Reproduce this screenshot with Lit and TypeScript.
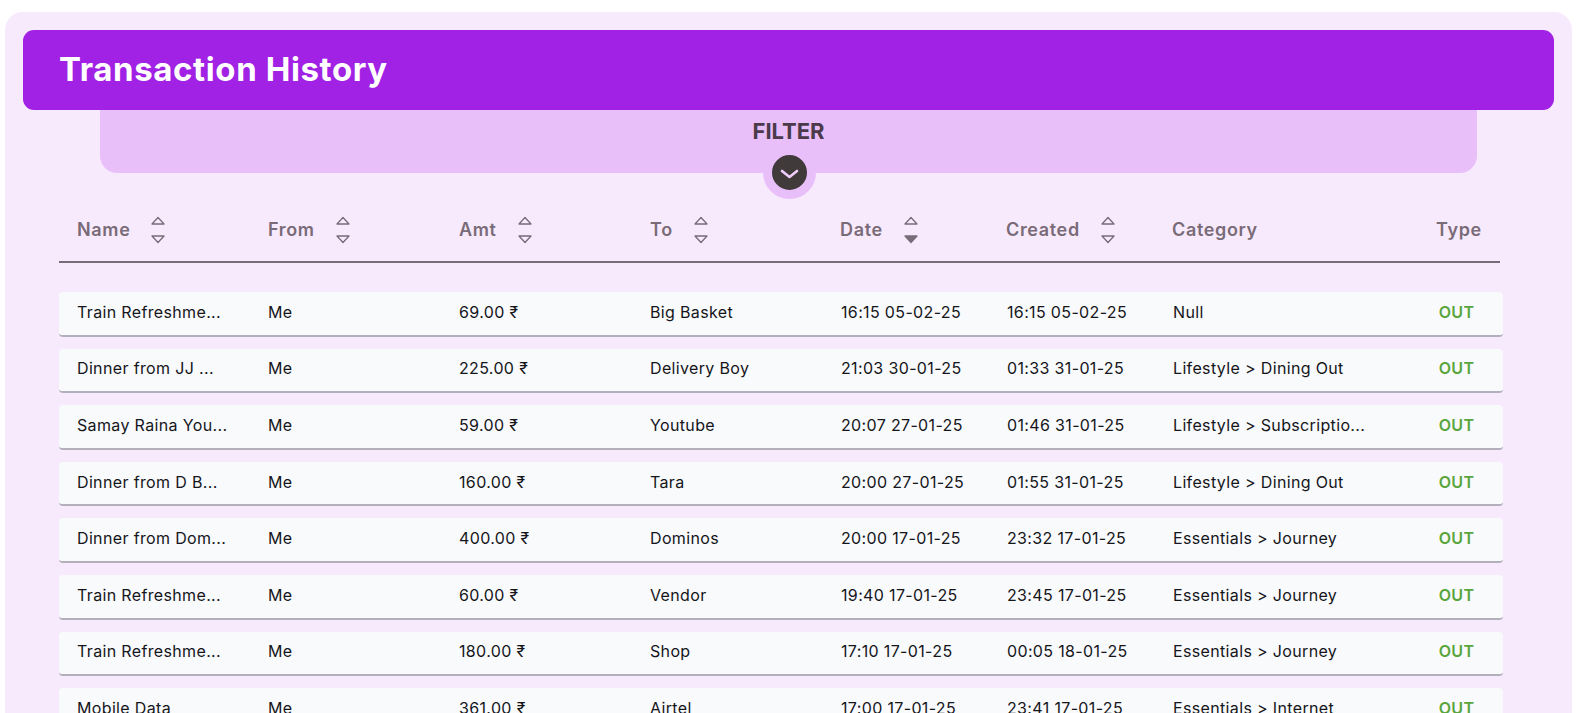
import { css, html, LitElement, nothing } from "lit";
import { customElement } from "lit/decorators.js";

type Col = { label: string; sort?: "none" | "desc"; cls?: string };

const COLUMNS: Col[] = [
  { label: "Name", sort: "none" },
  { label: "From", sort: "none" },
  { label: "Amt", sort: "none" },
  { label: "To", sort: "none" },
  { label: "Date", sort: "desc" },
  { label: "Created", sort: "none" },
  { label: "Category" },
  { label: "Type", cls: "type" },
];

const ROWS = [
  ["Train Refreshme...", "Me", "69.00 ₹", "Big Basket", "16:15 05-02-25", "16:15 05-02-25", "Null"],
  ["Dinner from JJ ...", "Me", "225.00 ₹", "Delivery Boy", "21:03 30-01-25", "01:33 31-01-25", "Lifestyle > Dining Out"],
  ["Samay Raina You...", "Me", "59.00 ₹", "Youtube", "20:07 27-01-25", "01:46 31-01-25", "Lifestyle > Subscriptio..."],
  ["Dinner from D B...", "Me", "160.00 ₹", "Tara", "20:00 27-01-25", "01:55 31-01-25", "Lifestyle > Dining Out"],
  ["Dinner from Dom...", "Me", "400.00 ₹", "Dominos", "20:00 17-01-25", "23:32 17-01-25", "Essentials > Journey"],
  ["Train Refreshme...", "Me", "60.00 ₹", "Vendor", "19:40 17-01-25", "23:45 17-01-25", "Essentials > Journey"],
  ["Train Refreshme...", "Me", "180.00 ₹", "Shop", "17:10 17-01-25", "00:05 18-01-25", "Essentials > Journey"],
  ["Mobile Data", "Me", "361.00 ₹", "Airtel", "17:00 17-01-25", "23:41 17-01-25", "Essentials > Internet"],
];

@customElement("app-root")
export class AppRoot extends LitElement {
  private sortIcon(state: "none" | "desc") {
    return html`
      <svg class="sort" viewBox="0 0 14 28" width="14" height="28">
        <path d="M7 1.5 L13 8 H1 Z" fill="none" stroke="#7a6b78" stroke-width="1.3" stroke-linejoin="round" />
        <path
          d="M1 20 H13 L7 26.5 Z"
          fill=${state === "desc" ? "#7a6b78" : "none"}
          stroke="#7a6b78"
          stroke-width="1.3"
          stroke-linejoin="round"
        />
      </svg>
    `;
  }

  render() {
    return html`
      <div class="card">
        <div class="title">Transaction History</div>
        <div class="filter">
          <span>FILTER</span>
          <div class="toggle">
            <svg viewBox="0 0 35 35" width="35" height="35">
              <path d="M10 16 L17.5 22 L25 16" fill="none" stroke="#f1cdfa" stroke-width="2.6" stroke-linecap="round" stroke-linejoin="round" />
            </svg>
          </div>
        </div>
        <div class="table">
          <div class="head grid">
            ${COLUMNS.map(
              (c) => html`
                <div class="th ${c.cls ?? ""}">
                  <span>${c.label}</span>
                  ${c.sort ? this.sortIcon(c.sort) : nothing}
                </div>
              `
            )}
          </div>
          ${ROWS.map(
            (r) => html`
              <div class="row grid">
                ${r.map((v) => html`<div class="td">${v}</div>`)}
                <div class="td out">OUT</div>
              </div>
            `
          )}
        </div>
      </div>
    `;
  }

  static styles = css`
    :host {
      display: block;
      height: 100vh;
      overflow: hidden;
      background: #fff;
      font-family: "Inter", "Liberation Sans", sans-serif;
    }

    .card {
      margin: 12px 7px 0 5px;
      padding: 18px;
      background: #f8eafd;
      border-radius: 18px;
    }

    .title {
      height: 80px;
      padding: 0 0 2px 36px;
      box-sizing: border-box;
      display: flex;
      align-items: center;
      background: #a121e4;
      border-radius: 11px;
      color: #fff;
      font-size: 33px;
      font-weight: 700;
      letter-spacing: 0.6px;
      position: relative;
      z-index: 1;
    }

    .filter {
      position: relative;
      height: 63px;
      margin: 0 77px;
      padding-top: 8px;
      box-sizing: border-box;
      background: #e9bff9;
      border-radius: 0 0 17px 17px;
      text-align: center;
      color: #4b3a49;
      font-size: 22px;
      font-weight: 700;
      line-height: 27px;
    }

    .toggle {
      position: absolute;
      left: 50%;
      bottom: -26px;
      width: 35px;
      height: 35px;
      margin-left: -26px;
      border: 9px solid #e9bff9;
      border-radius: 50%;
      background: #403a3a;
    }

    .toggle svg {
      display: block;
    }

    .table {
      width: 1444px;
      margin: 0 0 0 36px;
    }

    .grid {
      display: grid;
      grid-template-columns: 191px 191px 191px 190px 166px 166px 250px 90px;
      align-items: center;
    }

    .head {
      width: 1441px;
      height: 90px;
      box-sizing: border-box;
      align-items: end;
      border-bottom: 2px solid #7a6b78;
      margin-bottom: 29px;
    }

    .th {
      display: flex;
      align-items: center;
      gap: 21px;
      height: 28px;
      margin-bottom: 17px;
      padding-left: 18px;
      color: #7a6b78;
      font-size: 18px;
      font-weight: 600;
      letter-spacing: 0.65px;
    }

    .th span {
      margin-bottom: 2px;
    }

    .th.type {
      padding-left: 0;
      justify-content: center;
      margin-left: 20px;
    }

    .sort {
      flex: none;
    }

    .row {
      height: 44.6px;
      margin-bottom: 12px;
      padding-bottom: 3px;
      box-sizing: border-box;
      background: #f8fafc;
      border-bottom: 2px solid #b3b0bb;
      border-radius: 4px;
    }

    .td {
      padding-left: 18px;
      color: #15151a;
      font-size: 16px;
      letter-spacing: 0.35px;
      white-space: nowrap;
    }

    .td:nth-child(n + 5) {
      padding-left: 19px;
    }

    .td.out {
      padding-left: 0;
      text-align: center;
      margin-left: 15px;
      color: #5aa53d;
      font-weight: 600;
    }
  `;
}
